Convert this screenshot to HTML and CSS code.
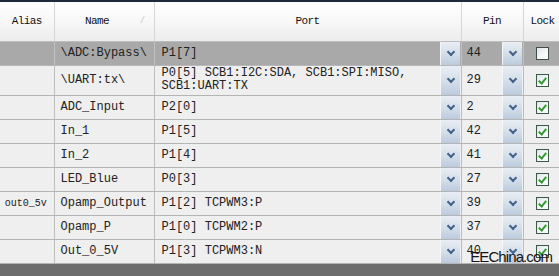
FILE: index.html
```html
<!DOCTYPE html>
<html lang="en">
<head>
    <meta charset="UTF-8">
    <title>Pins</title>
    <link rel="stylesheet" href="styles.css">
</head>
<body>
    <div class="frame">
        <table class="pins">
            <colgroup>
                <col class="w-alias">
                <col class="w-name">
                <col class="w-port">
                <col class="w-pin">
                <col class="w-lock">
            </colgroup>
            <thead>
                <tr>
                    <th>Alias</th>
                    <th class="c-name">Name<span class="sort">/</span></th>
                    <th>Port</th>
                    <th>Pin</th>
                    <th class="c-lock">Lock</th>
                </tr>
            </thead>
            <tbody>
                <tr class="sel">
                    <td class="c-alias"></td>
                    <td class="c-name">\ADC:Bypass\</td>
                    <td><div class="combo"><span class="val">P1[7]</span><span class="drop"></span></div></td>
                    <td class="c-pin"><div class="combo"><span class="val">44</span><span class="drop"></span></div></td>
                    <td class="c-lock"><span class="chk"></span></td>
                </tr>
                <tr class="tall">
                    <td class="c-alias"></td>
                    <td class="c-name">\UART:tx\</td>
                    <td><div class="combo"><span class="val">P0[5] SCB1:I2C:SDA, SCB1:SPI:MISO,<br>SCB1:UART:TX</span><span class="drop"></span></div></td>
                    <td class="c-pin"><div class="combo"><span class="val">29</span><span class="drop"></span></div></td>
                    <td class="c-lock"><span class="chk on"></span></td>
                </tr>
                <tr>
                    <td class="c-alias"></td>
                    <td class="c-name">ADC_Input</td>
                    <td><div class="combo"><span class="val">P2[0]</span><span class="drop"></span></div></td>
                    <td class="c-pin"><div class="combo"><span class="val">2</span><span class="drop"></span></div></td>
                    <td class="c-lock"><span class="chk on"></span></td>
                </tr>
                <tr>
                    <td class="c-alias"></td>
                    <td class="c-name">In_1</td>
                    <td><div class="combo"><span class="val">P1[5]</span><span class="drop"></span></div></td>
                    <td class="c-pin"><div class="combo"><span class="val">42</span><span class="drop"></span></div></td>
                    <td class="c-lock"><span class="chk on"></span></td>
                </tr>
                <tr>
                    <td class="c-alias"></td>
                    <td class="c-name">In_2</td>
                    <td><div class="combo"><span class="val">P1[4]</span><span class="drop"></span></div></td>
                    <td class="c-pin"><div class="combo"><span class="val">41</span><span class="drop"></span></div></td>
                    <td class="c-lock"><span class="chk on"></span></td>
                </tr>
                <tr>
                    <td class="c-alias"></td>
                    <td class="c-name">LED_Blue</td>
                    <td><div class="combo"><span class="val">P0[3]</span><span class="drop"></span></div></td>
                    <td class="c-pin"><div class="combo"><span class="val">27</span><span class="drop"></span></div></td>
                    <td class="c-lock"><span class="chk on"></span></td>
                </tr>
                <tr>
                    <td class="c-alias">out0_5v</td>
                    <td class="c-name">Opamp_Output</td>
                    <td><div class="combo"><span class="val">P1[2] TCPWM3:P</span><span class="drop"></span></div></td>
                    <td class="c-pin"><div class="combo"><span class="val">39</span><span class="drop"></span></div></td>
                    <td class="c-lock"><span class="chk on"></span></td>
                </tr>
                <tr>
                    <td class="c-alias"></td>
                    <td class="c-name">Opamp_P</td>
                    <td><div class="combo"><span class="val">P1[0] TCPWM2:P</span><span class="drop"></span></div></td>
                    <td class="c-pin"><div class="combo"><span class="val">37</span><span class="drop"></span></div></td>
                    <td class="c-lock"><span class="chk on"></span></td>
                </tr>
                <tr>
                    <td class="c-alias"></td>
                    <td class="c-name">Out_0_5V</td>
                    <td><div class="combo"><span class="val">P1[3] TCPWM3:N</span><span class="drop"></span></div></td>
                    <td class="c-pin"><div class="combo"><span class="val">40</span><span class="drop"></span></div></td>
                    <td class="c-lock"><span class="chk on"></span></td>
                </tr>
            </tbody>
        </table>
        <div class="mark">EEChina.com</div>
    </div>
</body>
</html>
```

FILE: styles.css
```css
body {
    margin: 0;
    background: #6d6d6d;
    font-family: 'Liberation Mono', monospace;
    overflow: hidden;
}

.frame {
    position: relative;
    width: 559px;
    height: 276px;
    border-top: 2px solid #1e2b3b;
    box-sizing: border-box;
    overflow: hidden;
}

.pins {
    border-collapse: collapse;
    table-layout: fixed;
    width: 559px;
}

.w-alias { width: 54px; }
.w-name { width: 100px; }
.w-port { width: 307px; }
.w-pin { width: 62px; }
.w-lock { width: 36px; }

.pins th,
.pins td {
    box-sizing: border-box;
    padding: 0;
}

.pins th {
    height: 39px;
    font-weight: normal;
    font-size: 11px;
    letter-spacing: -0.6px;
    color: #111;
    text-align: center;
    background: linear-gradient(180deg, #ffffff 0%, #f7f7f7 50%, #ececec 100%);
    border-left: 1px solid #d6d6d6;
    border-bottom: 1px solid #bdbdbd;
    position: relative;
}

.pins th:first-child {
    border-left: none;
}

.pins th.c-name {
    padding-right: 14px;
}

.pins th.c-lock {
    text-align: left;
    padding-left: 7px;
}

.sort {
    position: absolute;
    right: 9px;
    top: 14px;
    color: #c4c4c4;
    font-size: 9px;
}

.pins td {
    height: 24px;
    background: #efefef;
    border-left: 1px solid #bdbdbd;
    border-bottom: 1px solid #b4b4b4;
    font-size: 12px;
    color: #222;
    white-space: nowrap;
}

.pins td:first-child {
    border-left: none;
}

.pins td.c-alias {
    font-size: 10px;
    text-align: center;
    padding-right: 2px;
}

.pins td.c-name {
    padding-left: 6px;
}

.pins tr.tall td {
    height: 30px;
}

.pins tr.sel td {
    background: #a9a9a9;
    border-left-color: #c2c2c2;
    border-bottom-color: #b8b8b8;
}

.combo {
    display: flex;
    align-items: stretch;
    height: 23px;
}

.pins tr.tall .combo {
    height: 29px;
}

.combo .val {
    flex: 1;
    align-self: center;
    line-height: 13px;
    padding-left: 7px;
}

.c-pin .combo .val {
    padding-left: 5px;
}

.drop {
    width: 19px;
    margin-right: 1px;
    background: linear-gradient(180deg, #e9eef4 0%, #d4dfea 50%, #bccbdc 100%);
    border-left: 1px solid #f4f7fa;
    position: relative;
}

.drop::after {
    content: '';
    position: absolute;
    left: 7px;
    top: 50%;
    width: 4px;
    height: 4px;
    margin-top: -4px;
    border-right: 2px solid #44628a;
    border-bottom: 2px solid #44628a;
    transform: rotate(45deg);
}

.pins td.c-lock {
    padding-left: 12px;
}

.chk {
    display: block;
    width: 11px;
    height: 11px;
    border: 1px solid #3f4f46;
    background: linear-gradient(135deg, #dfe5ec 0%, #f6f8fa 60%, #ffffff 100%);
    position: relative;
}

.chk.on {
    border-color: #3b5a44;
}

.chk.on::after {
    content: '';
    position: absolute;
    left: 3px;
    top: 1px;
    width: 3px;
    height: 6px;
    border-right: 2px solid #2f9e2f;
    border-bottom: 2px solid #2f9e2f;
    transform: rotate(40deg);
}

.mark {
    position: absolute;
    right: 7px;
    bottom: 11px;
    font-family: 'Liberation Sans', Arial, sans-serif;
    font-size: 15px;
    letter-spacing: -0.9px;
    color: #151515;
}
```
